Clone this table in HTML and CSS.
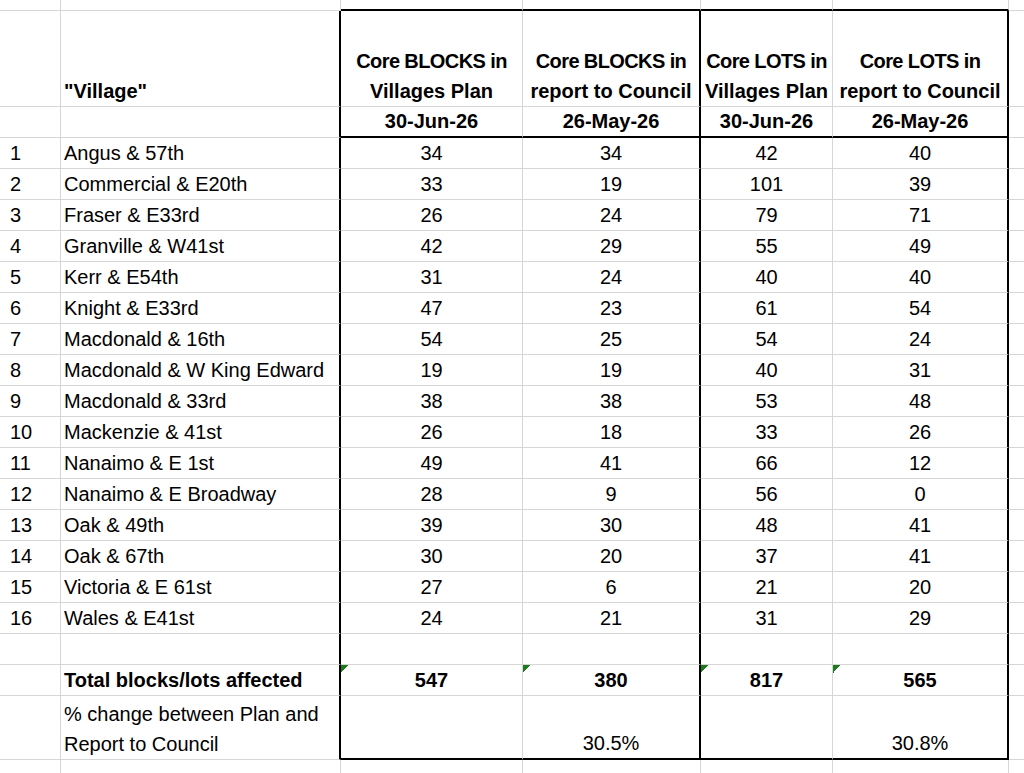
FILE: index.html
```html
<!DOCTYPE html>
<html lang="en">
<head>
<meta charset="utf-8">
<title>Villages core blocks and lots</title>
<link rel="stylesheet" href="styles.css">
</head>
<body>
<div class="sheet">
  <!-- row 0 (partial) -->
  <div class="c"></div><div class="c"></div><div class="c kb"></div><div class="c kb"></div><div class="c kb"></div><div class="c kb"></div><div class="c g"></div>
  <!-- header row -->
  <div class="c"></div>
  <div class="c t b kr">"Village"</div>
  <div class="c n b"><span><span class="tight">Core BLOCKS in</span><br>Villages Plan</span></div>
  <div class="c n b kr"><span><span class="tight">Core BLOCKS in</span><br>report to Council</span></div>
  <div class="c n b"><span><span class="tight">Core LOTS in</span><br>Villages Plan</span></div>
  <div class="c n b kr"><span><span class="tight">Core LOTS in</span><br>report to Council</span></div>
  <div class="c g"></div>
  <!-- dates row -->
  <div class="c"></div>
  <div class="c t kr"></div>
  <div class="c n b kb">30-Jun-26</div>
  <div class="c n b kb kr">26-May-26</div>
  <div class="c n b kb">30-Jun-26</div>
  <div class="c n b kb kr">26-May-26</div>
  <div class="c g"></div>

  <div class="c i">1</div><div class="c t kr">Angus &amp; 57th</div><div class="c n">34</div><div class="c n kr">34</div><div class="c n">42</div><div class="c n kr">40</div><div class="c g"></div>
  <div class="c i">2</div><div class="c t kr">Commercial &amp; E20th</div><div class="c n">33</div><div class="c n kr">19</div><div class="c n">101</div><div class="c n kr">39</div><div class="c g"></div>
  <div class="c i">3</div><div class="c t kr">Fraser &amp; E33rd</div><div class="c n">26</div><div class="c n kr">24</div><div class="c n">79</div><div class="c n kr">71</div><div class="c g"></div>
  <div class="c i">4</div><div class="c t kr">Granville &amp; W41st</div><div class="c n">42</div><div class="c n kr">29</div><div class="c n">55</div><div class="c n kr">49</div><div class="c g"></div>
  <div class="c i">5</div><div class="c t kr">Kerr &amp; E54th</div><div class="c n">31</div><div class="c n kr">24</div><div class="c n">40</div><div class="c n kr">40</div><div class="c g"></div>
  <div class="c i">6</div><div class="c t kr">Knight &amp; E33rd</div><div class="c n">47</div><div class="c n kr">23</div><div class="c n">61</div><div class="c n kr">54</div><div class="c g"></div>
  <div class="c i">7</div><div class="c t kr">Macdonald &amp; 16th</div><div class="c n">54</div><div class="c n kr">25</div><div class="c n">54</div><div class="c n kr">24</div><div class="c g"></div>
  <div class="c i">8</div><div class="c t kr">Macdonald &amp; W King Edward</div><div class="c n">19</div><div class="c n kr">19</div><div class="c n">40</div><div class="c n kr">31</div><div class="c g"></div>
  <div class="c i">9</div><div class="c t kr">Macdonald &amp; 33rd</div><div class="c n">38</div><div class="c n kr">38</div><div class="c n">53</div><div class="c n kr">48</div><div class="c g"></div>
  <div class="c i">10</div><div class="c t kr">Mackenzie &amp; 41st</div><div class="c n">26</div><div class="c n kr">18</div><div class="c n">33</div><div class="c n kr">26</div><div class="c g"></div>
  <div class="c i">11</div><div class="c t kr">Nanaimo &amp; E 1st</div><div class="c n">49</div><div class="c n kr">41</div><div class="c n">66</div><div class="c n kr">12</div><div class="c g"></div>
  <div class="c i">12</div><div class="c t kr">Nanaimo &amp; E Broadway</div><div class="c n">28</div><div class="c n kr">9</div><div class="c n">56</div><div class="c n kr">0</div><div class="c g"></div>
  <div class="c i">13</div><div class="c t kr">Oak &amp; 49th</div><div class="c n">39</div><div class="c n kr">30</div><div class="c n">48</div><div class="c n kr">41</div><div class="c g"></div>
  <div class="c i">14</div><div class="c t kr">Oak &amp; 67th</div><div class="c n">30</div><div class="c n kr">20</div><div class="c n">37</div><div class="c n kr">41</div><div class="c g"></div>
  <div class="c i">15</div><div class="c t kr">Victoria &amp; E 61st</div><div class="c n">27</div><div class="c n kr">6</div><div class="c n">21</div><div class="c n kr">20</div><div class="c g"></div>
  <div class="c i">16</div><div class="c t kr">Wales &amp; E41st</div><div class="c n">24</div><div class="c n kr">21</div><div class="c n">31</div><div class="c n kr">29</div><div class="c g"></div>
  <!-- empty row -->
  <div class="c"></div><div class="c t kr"></div><div class="c n"></div><div class="c n kr"></div><div class="c n"></div><div class="c n kr"></div><div class="c g"></div>
  <!-- totals -->
  <div class="c"></div>
  <div class="c t b kr">Total blocks/lots affected</div>
  <div class="c n b tri">547</div>
  <div class="c n b tri kr">380</div>
  <div class="c n b tri">817</div>
  <div class="c n b tri kr">565</div>
  <div class="c g"></div>
  <!-- % change -->
  <div class="c"></div>
  <div class="c t kr"><span>% change between Plan and<br>Report to Council</span></div>
  <div class="c n kb"></div>
  <div class="c n kb kr">30.5%</div>
  <div class="c n kb"></div>
  <div class="c n kb kr">30.8%</div>
  <div class="c g"></div>
  <!-- last partial row -->
  <div class="c"></div><div class="c"></div><div class="c"></div><div class="c"></div><div class="c"></div><div class="c"></div><div class="c g"></div>
</div>
</body>
</html>
```

FILE: styles.css
```css
html, body {
  margin: 0;
  padding: 0;
  background: #ffffff;
  overflow: hidden;
}

.sheet {
  width: 1024px;
  height: 773px;
  overflow: hidden;
  display: grid;
  grid-template-columns: 61px 280px 182px 178px 132px 176px 15px;
  grid-template-rows: 11px 96px 31px repeat(16, 31px) 31px 31px 64px 14px;
  font-family: "Liberation Sans", Arial, sans-serif;
  font-size: 20px;
  color: #000000;
}

.c {
  box-sizing: border-box;
  border-right: 1px solid #d6d6d6;
  border-bottom: 1px solid #d6d6d6;
  display: flex;
  align-items: flex-end;
  line-height: 30px;
  white-space: nowrap;
}

.g {
  border-right: none;
}

.i {
  padding-left: 10px;
}

.t {
  padding-left: 3px;
}

.n {
  justify-content: center;
  text-align: center;
}

.b {
  font-weight: 700;
}

.tight {
  letter-spacing: -0.6px;
}

.kr {
  border-right: 2px solid #000000;
}

.kb {
  border-bottom: 2px solid #000000;
}

.tri {
  background: linear-gradient(135deg, #1b7d1b 0 50%, transparent 50%) no-repeat 0 0 / 8px 8px;
}
```
